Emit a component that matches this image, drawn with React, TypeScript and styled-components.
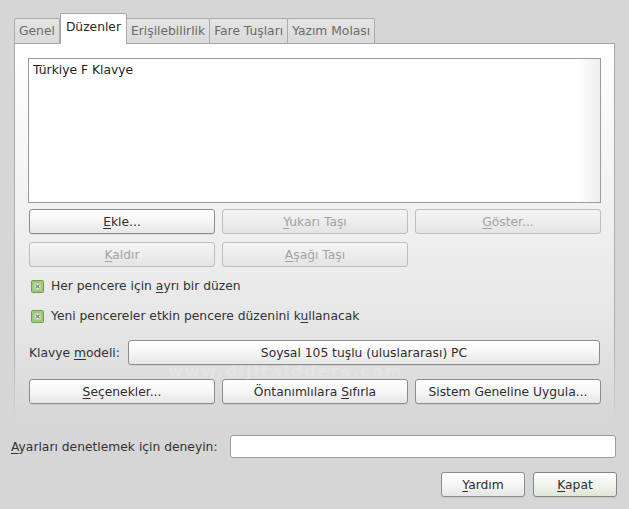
import React, { useState } from 'react';
import styled, { createGlobalStyle, css } from 'styled-components';

const GlobalStyle = createGlobalStyle`
  html, body {
    margin: 0;
    padding: 0;
    background: #d6d6d6;
  }
  body {
    font-family: 'DejaVu Sans', 'Liberation Sans', sans-serif;
    font-size: 12.3px;
    color: #2e2e2e;
  }
`;

const Window = styled.div`
  position: relative;
  width: 629px;
  height: 509px;
  background: #d6d6d6;
  box-sizing: border-box;
  padding-top: 13px;
  display: flex;
  flex-direction: column;
  overflow: hidden;
`;

const TabBar = styled.div`
  display: flex;
  align-items: flex-end;
  margin-left: 14px;
  height: 30px;
  position: relative;
  z-index: 1;
`;

const Tab = styled.div<{ $active?: boolean }>`
  box-sizing: border-box;
  padding: 0 4px;
  border: 1px solid #ababab;
  border-bottom: none;
  border-radius: 2px 2px 0 0;
  display: flex;
  align-items: center;
  ${({ $active }) =>
    $active
      ? css`
          background: #ffffff;
          color: #2a2a2a;
          padding: 0 5px 4px;
          margin-bottom: -1px;
          height: 31px;
          border-color: #a6a6a6;
        `
      : css`
          height: 25px;
          background: linear-gradient(#e4e4e4, #dadada);
          color: #6a6a6a;
          margin-left: -1px;
          &:first-child {
            margin-left: 0;
          }
        `}
`;

const Panel = styled.div`
  margin: 0 14px 0 14px;
  height: 378px;
  box-sizing: border-box;
  border-top: 1px solid #a6a6a6;
  border-left: 1px solid;
  border-right: 1px solid;
  border-image: linear-gradient(#a6a6a6 0%, #b0b0b0 80%, #d6d6d6 100%) 1;
  border-top-style: solid;
  background: linear-gradient(#ffffff 0%, #f6f6f6 30%, #e6e6e6 75%, #d6d6d6 100%);
  padding: 14px 13px 0 13px;
  display: flex;
  flex-direction: column;
`;

const ListBox = styled.div`
  height: 145px;
  box-sizing: border-box;
  border: 1px solid #9c9c9c;
  background: linear-gradient(to right, #ffffff 0%, #ffffff 96%, #eeeeee 100%);
  padding: 4px 4px;
  color: #1e1e1e;
`;

const ButtonGrid = styled.div`
  display: grid;
  grid-template-columns: repeat(3, 186px);
  column-gap: 7px;
  row-gap: 8px;
  margin: 6px 1px 0 1px;
`;

const Button = styled.button<{ $default?: boolean; $w?: number }>`
  box-sizing: border-box;
  height: 25px;
  ${({ $w }) => ($w ? `width: ${$w}px;` : '')}
  font-family: inherit;
  font-size: 12.3px;
  color: #2e2e2e;
  border: 1px solid #8c8c8c;
  border-radius: 3px;
  background: linear-gradient(#ffffff 0%, #f7f7f7 45%, #e6e6e6 100%);
  box-shadow: 0 1px 0 rgba(0, 0, 0, 0.06);
  padding: 0 8px;
  display: flex;
  align-items: center;
  justify-content: center;
  white-space: pre;
  ${({ $default }) =>
    $default &&
    css`
      background: linear-gradient(#ffffff 0%, #f4f6f0 45%, #dfe6d6 100%);
      border-color: #7f8a78;
    `}
  &:disabled {
    color: #a2a2a2;
    border-color: #bdbdbd;
    background: linear-gradient(#f4f4f4 0%, #ededed 50%, #e4e4e4 100%);
    box-shadow: none;
  }
`;

const CheckRow = styled.label<{ $top: number }>`
  display: flex;
  align-items: center;
  gap: 7px;
  margin-top: ${({ $top }) => $top}px;
  margin-left: 3px;
  height: 16px;
  color: #333;
`;

const ModelRow = styled.div`
  display: flex;
  align-items: center;
  margin-top: 16px;
  margin-left: 1px;
`;

const ModelLabel = styled.span`
  width: 99px;
  color: #333;
`;

const Combo = styled(Button)`
  flex: 1;
  margin-right: 1px;
`;

const ActionRow = styled(ButtonGrid)`
  margin-top: 14px;
`;

const TryRow = styled.div`
  display: flex;
  align-items: center;
  margin: 14px 13px 0 11px;
`;

const TryLabel = styled.span`
  width: 219px;
  color: #333;
`;

const Entry = styled.input`
  flex: 1;
  box-sizing: border-box;
  height: 23px;
  border: 1px solid #9c9c9c;
  border-radius: 3px;
  background: #fff;
  font-family: inherit;
  font-size: 12.3px;
  outline: none;
`;

const DialogButtons = styled.div`
  display: flex;
  justify-content: flex-end;
  gap: 8px;
  margin: 14px 12px 0 0;
`;

const U = styled.span`
  text-decoration: underline;
  text-underline-offset: 2px;
`;

const Watermark = styled.div`
  position: absolute;
  left: 168px;
  top: 365px;
  font-family: 'DejaVu Sans', sans-serif;
  font-weight: bold;
  font-size: 16px;
  line-height: 13px;
  letter-spacing: 2px;
  color: rgba(255, 255, 255, 0.16);
  pointer-events: none;
`;

function CheckMark() {
  return (
    <svg width="13" height="13" viewBox="0 0 13 13">
      <rect x="0.5" y="0.5" width="12" height="12" rx="1" fill="#9ccb78" stroke="#6f9d52" />
      <rect x="3.5" y="3.5" width="6" height="6" fill="#f4f8f0" stroke="#b9d4a5" />
      <path d="M4.5 4.5 L8.5 8.5 M8.5 4.5 L4.5 8.5" stroke="#7a8a70" strokeWidth="1.2" />
    </svg>
  );
}

export default function App() {
  const [tab] = useState(1);
  const tabs = ['Genel', 'Düzenler', 'Erişilebilirlik', 'Fare Tuşları', 'Yazım Molası'];

  return (
    <>
      <GlobalStyle />
      <Window>
        <TabBar>
          {tabs.map((t, i) => (
            <Tab key={t} $active={i === tab}>
              {t}
            </Tab>
          ))}
        </TabBar>
        <Panel>
          <ListBox>Türkiye F Klavye</ListBox>
          <ButtonGrid>
            <Button>
              <span><U>E</U>kle...</span>
            </Button>
            <Button disabled>
              <span><U>Y</U>ukarı Taşı</span>
            </Button>
            <Button disabled>
              <span><U>G</U>öster...</span>
            </Button>
            <Button disabled>
              <span><U>K</U>aldır</span>
            </Button>
            <Button disabled>
              <span><U>A</U>şağı Taşı</span>
            </Button>
          </ButtonGrid>
          <CheckRow $top={11}>
            <CheckMark />
            <span>
              Her pencere için <U>a</U>yrı bir düzen
            </span>
          </CheckRow>
          <CheckRow $top={14}>
            <CheckMark />
            <span>
              Yeni pencereler etkin pencere düzenini k<U>u</U>llanacak
            </span>
          </CheckRow>
          <ModelRow>
            <ModelLabel>
              Klavye <U>m</U>odeli:
            </ModelLabel>
            <Combo>Soysal 105 tuşlu (uluslararası) PC</Combo>
          </ModelRow>
          <ActionRow>
            <Button>
              <span><U>S</U>eçenekler...</span>
            </Button>
            <Button>
              <span>Öntanımlılara <U>S</U>ıfırla</span>
            </Button>
            <Button>Sistem Geneline Uygula...</Button>
          </ActionRow>
        </Panel>
        <TryRow>
          <TryLabel>
            <U>A</U>yarları denetlemek için deneyin:
          </TryLabel>
          <Entry />
        </TryRow>
        <DialogButtons>
          <Button $w={84}>
            <span><U>Y</U>ardım</span>
          </Button>
          <Button $w={84} $default>
            <span><U>K</U>apat</span>
          </Button>
        </DialogButtons>
        <Watermark>www.dijitaldders.com</Watermark>
      </Window>
    </>
  );
}
